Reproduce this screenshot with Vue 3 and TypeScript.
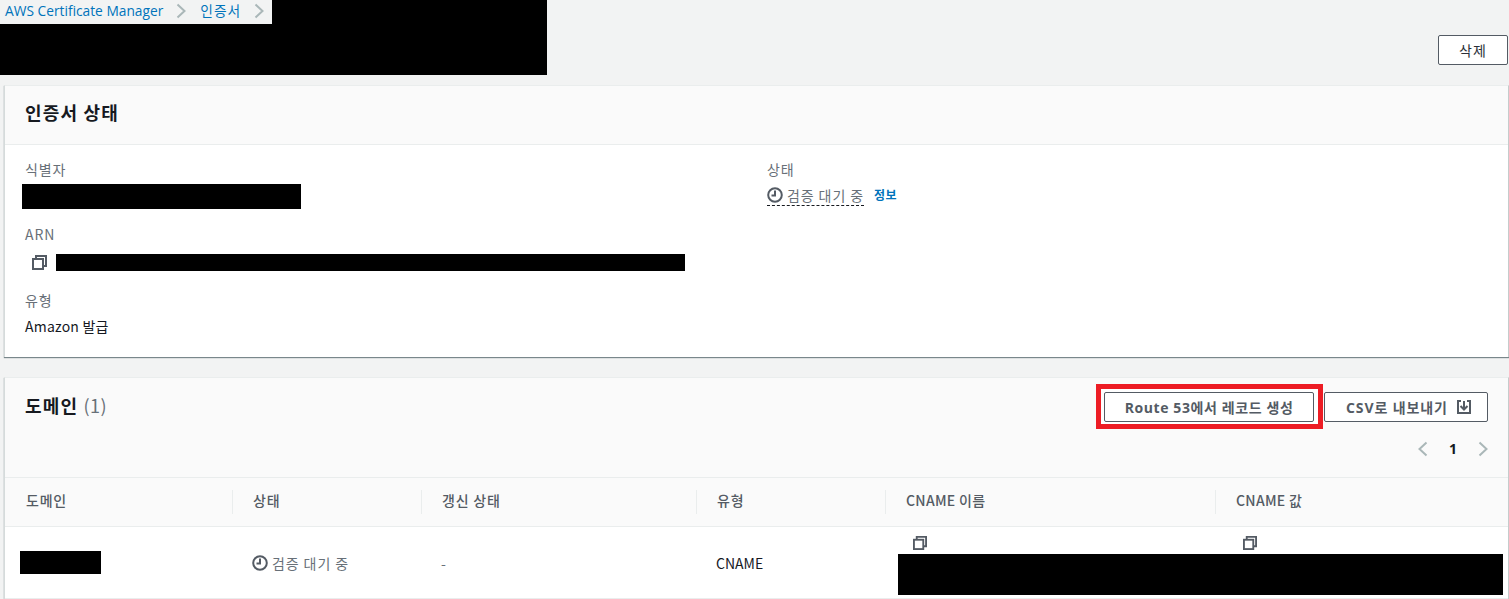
<script setup lang="ts">
const columns = [
  { label: "도메인", width: 227, latin: false },
  { label: "상태", width: 189, latin: false },
  { label: "갱신 상태", width: 275, latin: false },
  { label: "유형", width: 189, latin: false },
  { label: "CNAME 이름", width: 330, latin: true },
  { label: "CNAME 값", width: 293, latin: true },
];
</script>

<template>
  <div class="page">
    <nav class="crumbs">
      <a>AWS Certificate Manager</a>
      <svg class="sep" viewBox="0 0 10 16"><path d="M1.5 1.5 8.5 8l-7 6.500" /></svg>
      <a class="ko">인증서</a>
      <svg class="sep" viewBox="0 0 10 16"><path d="M1.5 1.5 8.5 8l-7 6.500" /></svg>
    </nav>
    <div class="redact top-a"></div>
    <div class="redact top-b"></div>

    <div class="title-row">
      <button class="btn delete">삭제</button>
    </div>

    <section class="card status-card">
      <header class="card-head">
        <h2>인증서 상태</h2>
      </header>
      <div class="status-body">
        <div class="col-left">
          <div class="label">식별자</div>
          <div class="redact id-block"></div>
          <div class="label arn-label">ARN</div>
          <div class="arn-row">
            <svg class="copy" viewBox="0 0 15 15">
              <path d="M4 3.500V1h10v10h-3" />
              <rect x="1" y="4" width="10" height="10" />
            </svg>
            <div class="redact arn-block"></div>
          </div>
          <div class="label type-label">유형</div>
          <div class="value">Amazon 발급</div>
        </div>
        <div class="col-right">
          <div class="label">상태</div>
          <div class="status-row">
            <span class="pending dashed">
              <svg class="clock" viewBox="0 0 16 16">
                <circle cx="8" cy="8" r="6.800" />
                <path d="M8 3.500V8.500H4.500" />
              </svg>
              검증 대기 중
            </span>
            <a class="info">정보</a>
          </div>
        </div>
      </div>
    </section>

    <section class="card domain-card">
      <header class="domain-head">
        <h2>도메인 <span class="count">(1)</span></h2>
        <div class="domain-tools">
          <div class="actions">
            <div class="highlight">
              <button class="btn route">Route 53에서 레코드 생성</button>
            </div>
            <button class="btn csv">
              CSV로 내보내기
              <svg class="download" viewBox="0 0 14 14">
                <path d="M4 1H1v12h12V1h-3" />
                <path d="M7 1v8M3.500 6 7 9.500 10.500 6" />
              </svg>
            </button>
          </div>
          <div class="pager">
            <svg viewBox="0 0 10 16"><path d="M8.500 1.500 1.500 8l7 6.500" /></svg>
            <b>1</b>
            <svg viewBox="0 0 10 16"><path d="M1.500 1.500 8.500 8l-7 6.500" /></svg>
          </div>
        </div>
      </header>

      <div class="table-head">
        <div
          v-for="(col, i) in columns"
          :key="col.label"
          class="th"
          :class="{ first: i === 0, latin: col.latin }"
          :style="{ width: col.width + 'px' }"
        >
          {{ col.label }}
        </div>
      </div>

      <div class="table-row">
        <div class="td" style="width: 227px">
          <div class="redact domain-block"></div>
        </div>
        <div class="td" style="width: 189px">
          <span class="pending">
            <svg class="clock" viewBox="0 0 16 16">
              <circle cx="8" cy="8" r="6.800" />
              <path d="M8 3.500V8.500H4.500" />
            </svg>
            검증 대기 중
          </span>
        </div>
        <div class="td dash" style="width: 275px">-</div>
        <div class="td plain" style="width: 189px">CNAME</div>
        <div class="td stacked" style="width: 330px">
          <svg class="copy" viewBox="0 0 15 15">
            <path d="M4 3.500V1h10v10h-3" />
            <rect x="1" y="4" width="10" height="10" />
          </svg>
        </div>
        <div class="td stacked" style="width: 293px">
          <svg class="copy" viewBox="0 0 15 15">
            <path d="M4 3.500V1h10v10h-3" />
            <rect x="1" y="4" width="10" height="10" />
          </svg>
        </div>
        <div class="redact cname-block"></div>
      </div>
    </section>
  </div>
</template>

<style>
html,
body {
  margin: 0;
  background: #f2f3f3;
  overflow: hidden;
}
</style>

<style scoped>
.page {
  position: relative;
  width: 1509px;
  height: 599px;
  overflow: hidden;
  background: #f2f3f3;
  color: #16191f;
  font-family: "Noto Sans CJK KR", "Open Sans", sans-serif;
  font-size: 14px;
}

.redact {
  background: #000;
}

.crumbs {
  display: flex;
  align-items: center;
  box-sizing: border-box;
  height: 24px;
  padding: 0 0 3px 5px;
  font-family: "Open Sans", "Noto Sans CJK KR", sans-serif;
  font-size: 13.750px;
  line-height: 20px;
  color: #0073bb;
}

.crumbs a {
  white-space: nowrap;
}

.crumbs .ko {
  letter-spacing: 1px;
}

.sep {
  width: 10px;
  height: 16px;
  margin: 0 14px 0 13px;
  fill: none;
  stroke: #aab7b8;
  stroke-width: 2;
}

.top-a {
  position: absolute;
  left: 272px;
  top: 0;
  width: 275px;
  height: 24px;
}

.top-b {
  position: absolute;
  left: 0;
  top: 24px;
  width: 547px;
  height: 51px;
}

.title-row {
  display: flex;
  justify-content: flex-end;
  height: 61px;
  padding: 11px 1px 0 0;
  box-sizing: border-box;
}

.btn {
  box-sizing: border-box;
  background: #fff;
  border: 1px solid #545b64;
  border-radius: 2px;
  color: #545b64;
  font-family: "Open Sans", "Noto Sans CJK KR", sans-serif;
  font-weight: 700;
  font-size: 14px;
  letter-spacing: 0.6px;
  padding: 0;
}

.delete {
  width: 70px;
  height: 30px;
  font-weight: 400;
  color: #2b3038;
  letter-spacing: 1px;
}

.card {
  margin-left: 4px;
  background: #fff;
  border-left: 1px solid #d5dbdb;
  border-right: 1px solid #c5cccc;
  border-top: 1px solid #eaeded;
  box-shadow: 0 1px 1px rgba(0, 28, 36, 0.5);
}

.status-card {
  height: 272px;
  box-sizing: border-box;
}

.card-head {
  height: 44px;
  padding: 14px 0 0 20px;
  background: #fafafa;
  border-bottom: 1px solid #eaeded;
}

h2 {
  margin: 0;
  font-size: 18px;
  font-weight: 700;
  line-height: 24px;
  letter-spacing: 1.200px;
  color: #16191f;
}

.status-body {
  display: flex;
  padding-top: 14px;
}

.col-left {
  width: 741px;
  padding-left: 20px;
  box-sizing: border-box;
}

.label {
  color: #687078;
  font-size: 14px;
  line-height: 20px;
  height: 22px;
  letter-spacing: 0.9px;
}

.id-block {
  width: 279px;
  height: 25px;
  margin: 3px 0 0 -3px;
}

.arn-label {
  margin-top: 15px;
}

.arn-row {
  display: flex;
  align-items: center;
  height: 17px;
  margin-top: 8px;
  padding-left: 7px;
}

.copy {
  width: 15px;
  height: 15px;
  flex: none;
  fill: none;
  stroke: #545b64;
  stroke-width: 2;
}

.arn-block {
  width: 629px;
  height: 17px;
  margin-left: 9px;
}

.type-label {
  margin-top: 19px;
}

.value {
  margin-top: 3px;
  line-height: 22px;
  font-size: 14px;
  letter-spacing: 0.2px;
  color: #16191f;
}

.col-right {
  padding-left: 21px;
}

.status-row {
  display: flex;
  align-items: flex-start;
  gap: 10px;
  margin-top: 4px;
}

.pending {
  display: inline-flex;
  align-items: center;
  gap: 4px;
  color: #687078;
  font-size: 14px;
  line-height: 20px;
  height: 20px;
  letter-spacing: 0.9px;
  white-space: nowrap;
}

.dashed {
  border-bottom: 1px dashed #16191f;
}

.clock {
  width: 16px;
  height: 16px;
  fill: none;
  stroke: #545b64;
  stroke-width: 2;
}

.info {
  color: #0073bb;
  font-size: 12px;
  font-weight: 700;
  line-height: 20px;
  letter-spacing: 0.5px;
}

.domain-card {
  margin-top: 20px;
  height: 222px;
  box-sizing: border-box;
}

.domain-head {
  display: flex;
  justify-content: space-between;
  height: 100px;
  box-sizing: border-box;
  background: #fafafa;
  padding: 0 20px;
  border-bottom: 1px solid #eaeded;
}

.domain-head h2 {
  margin-top: 15px;
}

.count {
  color: #687078;
  font-weight: 400;
  letter-spacing: 0.400px;
}

.domain-tools {
  display: flex;
  flex-direction: column;
  align-items: flex-end;
}

.actions {
  display: flex;
  align-items: flex-start;
  gap: 1px;
  margin-top: 6px;
}

.highlight {
  border: 5px solid #ed1c24;
  padding: 3px 4px 2px 3px;
  background: #fff;
}

.route {
  display: block;
  width: 210px;
  height: 30px;
}

.csv {
  display: flex;
  align-items: center;
  gap: 9px;
  width: 164px;
  height: 30px;
  margin-top: 8px;
  padding-left: 21px;
  letter-spacing: 0.900px;
}

.download {
  width: 14px;
  height: 14px;
  fill: none;
  stroke: #545b64;
  stroke-width: 2;
}

.pager {
  display: flex;
  align-items: center;
  gap: 20px;
  margin-top: 10px;
}

.pager svg {
  width: 10px;
  height: 16px;
  fill: none;
  stroke: #aab7b8;
  stroke-width: 2;
}

.pager b {
  font-family: "Open Sans", sans-serif;
  font-size: 14px;
  color: #16191f;
  width: 10px;
  text-align: center;
}

.table-head {
  display: flex;
  align-items: center;
  height: 48px;
  background: #fafafa;
  border-bottom: 1px solid #eaeded;
}

.th {
  box-sizing: border-box;
  height: 24px;
  line-height: 21px;
  padding-left: 20px;
  color: #545b64;
  font-size: 14px;
  font-weight: 500;
  letter-spacing: 0.8px;
  border-left: 1px solid #eaeded;
  white-space: nowrap;
}

.th.latin {
  letter-spacing: 0.3px;
}

.th.first {
  border-left: 0;
  padding-left: 21px;
}

.table-row {
  position: relative;
  display: flex;
  height: 72px;
  background: #fff;
  border-bottom: 1px solid #eaeded;
  box-sizing: border-box;
}

.td {
  box-sizing: border-box;
  display: flex;
  align-items: center;
  padding-left: 20px;
  flex: none;
}

.domain-block {
  width: 81px;
  height: 23px;
  margin-left: -5px;
}

.dash {
  color: #687078;
}

.plain {
  font-size: 14px;
  color: #16191f;
}

.stacked {
  align-items: flex-start;
  padding-top: 9px;
  padding-left: 28px;
}

.stacked .copy {
  width: 14px;
  height: 14px;
}

.cname-block {
  position: absolute;
  left: 893px;
  top: 27px;
  width: 605px;
  height: 41px;
}
</style>
